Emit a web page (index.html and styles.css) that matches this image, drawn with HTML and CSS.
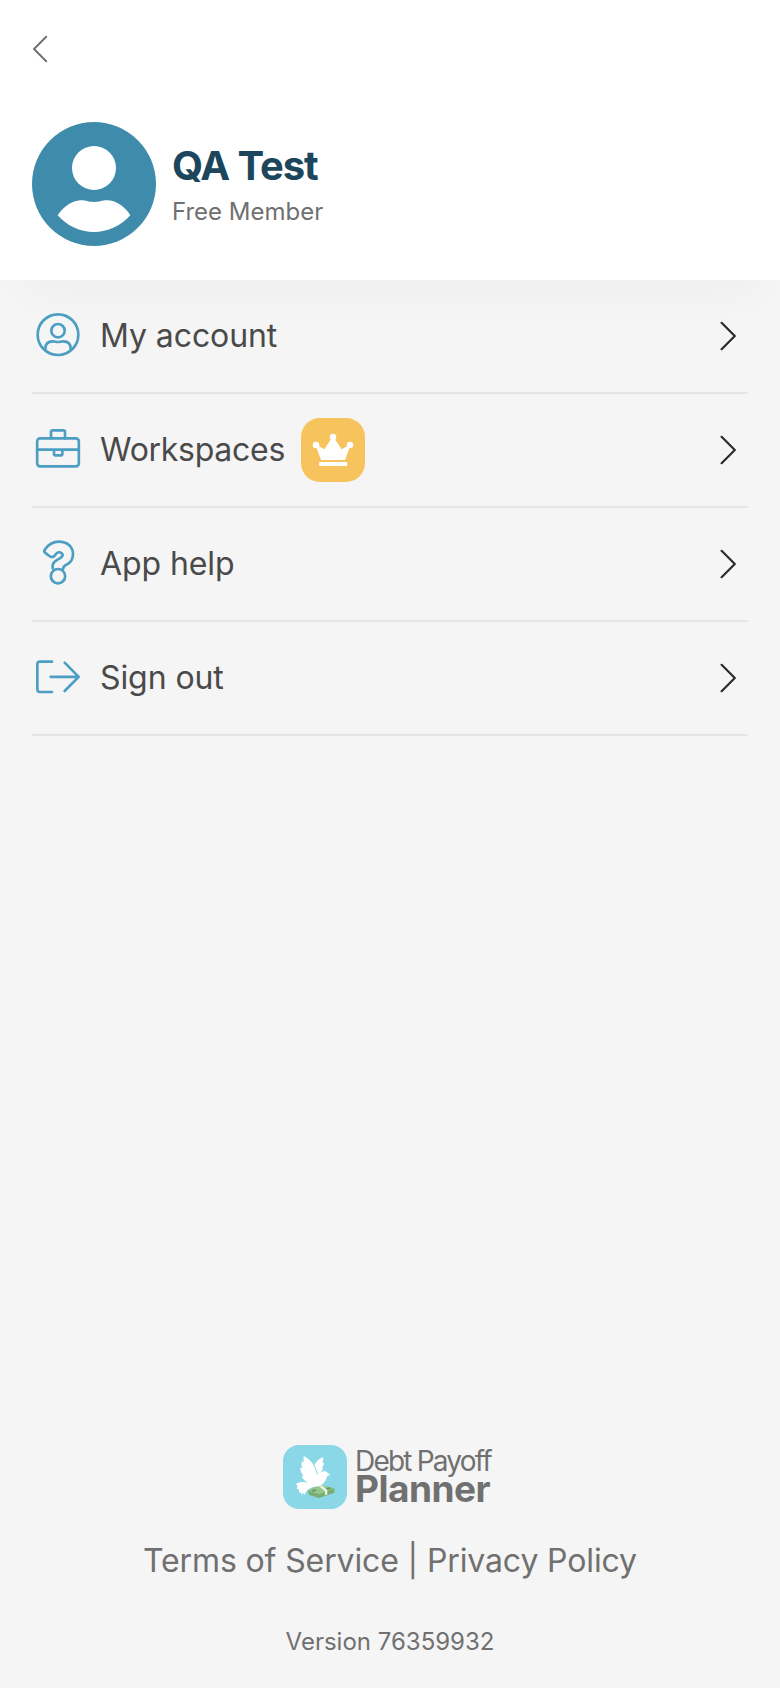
FILE: index.html
```html
<!DOCTYPE html>
<html lang="en">
<head>
<meta charset="utf-8">
<title>Account</title>
<link rel="stylesheet" href="styles.css">
</head>
<body>
<div class="screen">
  <header class="header">
    <button class="back" aria-label="Back">
      <svg width="16" height="28" viewBox="0 0 16 28" fill="none" stroke="#707070" stroke-width="2" stroke-linecap="round" stroke-linejoin="round"><path d="M14.2 1.8 2 14 14.2 26.2"/></svg>
    </button>
    <div class="profile">
      <svg class="avatar" viewBox="0 0 372 372">
        <circle cx="186" cy="186" r="186" fill="#3f8bab"/>
        <circle cx="186" cy="138" r="66" fill="#fff"/>
        <path fill="#fff" d="M77 280C97 251 123 235 148 235C162 235 169 240 186 240C203 240 210 235 225 235C252 235 279 254 295 280C267 312 227 330 186 330C144 330 105 312 77 280Z"/>
      </svg>
      <div class="identity">
        <h1 class="name">QA Test</h1>
        <p class="plan">Free Member</p>
      </div>
    </div>
  </header>

  <nav class="menu">
    <a class="row">
      <svg class="icon" viewBox="0 0 132 132"><circle cx="66" cy="65" r="61"/><circle cx="66" cy="53" r="20"/><path d="M28 112V107Q28 85 50 85C58 85 60 87 66 87S74 85 82 85Q104 85 104 107V112"/></svg>
      <span class="label">My account</span>
      <svg class="chevron" viewBox="0 0 16 30"><path d="M1.6 1.8 14.8 15 1.6 28.2"/></svg>
    </a>
    <a class="row">
      <svg class="icon" viewBox="0 0 132 132"><rect x="3.5" y="34" width="125" height="84" rx="9"/><path d="M45 34V15Q45 10 50 10H82Q87 10 87 15V34M3.5 68H128.500M54 68V81Q54 85 58 85H75Q79 85 79 81V68"/></svg>
      <span class="label label-workspaces">Workspaces</span>
      <span class="badge">
        <svg width="42" height="34" viewBox="0 0 126 102" fill="#fff"><circle cx="63" cy="12" r="10"/><circle cx="12" cy="36" r="10"/><circle cx="114" cy="36" r="10"/><path d="M27 81 12 40 20 39 37 49 60 14H66L89 49 106 39 114 40 99 81Z"/><rect x="21" y="87" width="85" height="12" rx="4"/></svg>
      </span>
      <svg class="chevron" viewBox="0 0 16 30"><path d="M1.6 1.8 14.8 15 1.6 28.2"/></svg>
    </a>
    <a class="row">
      <svg class="icon" viewBox="0 0 132 132"><path d="M50 82C48 68 53 62 66 55C80 48 83 42 77 37C72 32 64 33 60 39C54 49 47 50 40 45L27 35C23 31 24 28 28 24C39 9 53 2 68 2C93 2 111 17 111 39C111 55 103 66 91 71C84 74 82 77 81 84"/><circle cx="66" cy="105.500" r="21.500"/></svg>
      <span class="label">App help</span>
      <svg class="chevron" viewBox="0 0 16 30"><path d="M1.6 1.8 14.8 15 1.6 28.2"/></svg>
    </a>
    <a class="row">
      <svg class="icon" viewBox="0 0 132 132"><path d="M48 20H12Q4 20 4 28V103Q4 111 12 111H48M44 65.500H128M86 23 128 65.500 86 108"/></svg>
      <span class="label">Sign out</span>
      <svg class="chevron" viewBox="0 0 16 30"><path d="M1.6 1.8 14.8 15 1.6 28.2"/></svg>
    </a>
  </nav>

  <footer class="footer">
    <div class="brand">
      <svg class="logo" viewBox="0 0 192 192">
        <rect width="192" height="192" rx="48" fill="#8ad7e7"/>
        <path fill="#79ad72" d="M74 137 108 120 154 130V143L108 159 79 150Z"/>
        <path fill="#95c68c" d="M74 137 108 120 154 130 108 148Z"/>
        <path fill="#5f965c" d="m84 138 10-5 7 3-9 4zM128 130l10-3 7 3-10 4z"/>
        <path fill="#e9f3e4" d="m108 124 9-3 16 15v12l-7 3v-12z"/>
        <path fill="#fff" d="M74 113C62 105 56 98 56 92L62 93C54 83 51 75 52 68L58 70C54 60 55 53 58 49L63 52C61 44 61 38 63 33C76 40 86 50 93 62C98 50 108 42 119 36C122 42 120 48 118 53L123 53C122 61 120 65 116 68L120 70C118 76 115 80 111 84C120 77 130 77 134 84L142 89 133 93C129 107 120 119 108 124L91 126C80 131 70 134 65 150L60 143 57 149 52 141 48 143 48 133 42 132 43 122 39 117C52 109 62 111 74 113Z"/>
        <path d="M93 61C98 70 101 79 104 88" fill="none" stroke="#8ad7e7" stroke-width="3"/>
      </svg>
      <div class="wordmark">
        <span class="wordmark-top">Debt Payoff</span>
        <span class="wordmark-bottom">Planner</span>
      </div>
    </div>
    <p class="legal"><a>Terms of Service</a> | <a>Privacy Policy</a></p>
    <p class="version">Version 76359932</p>
  </footer>
</div>
</body>
</html>
```

FILE: styles.css
```css
* { box-sizing: border-box; }
body {
  margin: 0;
  background: #f5f5f5;
  font-family: Inter, "Liberation Sans", sans-serif;
  color: #707070;
}
h1, p { margin: 0; }
.screen {
  display: flex;
  flex-direction: column;
  height: 1688px;
  overflow: hidden;
}
.header {
  height: 280px;
  padding: 35px 32px 0;
  background: #fff;
  box-shadow: 0 32px 44px -22px rgba(0, 0, 0, 0.035);
}
.back {
  display: block;
  height: 28px;
  padding: 0;
  border: 0;
  background: none;
}
.back svg { display: block; }
.profile {
  display: flex;
  gap: 16px;
  margin-top: 59px;
}
.avatar { width: 124px; height: 124px; }
.identity { padding-top: 20px; }
.name {
  font-size: 40px;
  line-height: 48px;
  font-weight: 700;
  letter-spacing: -1.1px;
  color: #1d465c;
}
.plan {
  margin-top: 6px;
  font-size: 24px;
  line-height: 32px;
}
.menu { padding: 0 32px; }
.row {
  display: flex;
  align-items: center;
  height: 114px;
  padding: 0 12px 0 4px;
  border-bottom: 2px solid #e5e5e5;
}
.icon {
  width: 44px;
  height: 44px;
  margin: 0 20px 3px 0;
  overflow: visible;
  fill: none;
  stroke: #4c9fc3;
  stroke-width: 8;
  stroke-linecap: round;
  stroke-linejoin: round;
}
.label {
  font-size: 32px;
  line-height: 40px;
  letter-spacing: -0.08px;
  color: #4a4a4a;
}
.label-workspaces {
  width: 185px;
  letter-spacing: -0.28px;
}
.badge {
  display: flex;
  align-items: center;
  justify-content: center;
  width: 64px;
  height: 64px;
  margin-left: 16px;
  border-radius: 19px;
  background: #f6c35c;
}
.chevron {
  width: 16px;
  height: 30px;
  margin-left: auto;
  fill: none;
  stroke: #2b2b2b;
  stroke-width: 2.2;
  stroke-linecap: round;
  stroke-linejoin: round;
}
.footer {
  display: flex;
  flex-direction: column;
  align-items: center;
  margin-top: auto;
  padding-bottom: 30px;
}
.brand {
  display: flex;
  gap: 8px;
  width: 214px;
}
.logo { width: 64px; height: 64px; }
.wordmark {
  display: flex;
  flex-direction: column;
  white-space: nowrap;
}
.wordmark-top {
  font-size: 28px;
  line-height: 32px;
  letter-spacing: -1.8px;
}
.wordmark-bottom {
  font-size: 37px;
  line-height: 23px;
  font-weight: 700;
  letter-spacing: -0.5px;
}
.legal {
  margin-top: 32px;
  font-size: 32px;
  line-height: 40px;
  letter-spacing: -0.13px;
}
.version {
  margin-top: 45px;
  font-size: 24px;
  line-height: 32px;
}
```
